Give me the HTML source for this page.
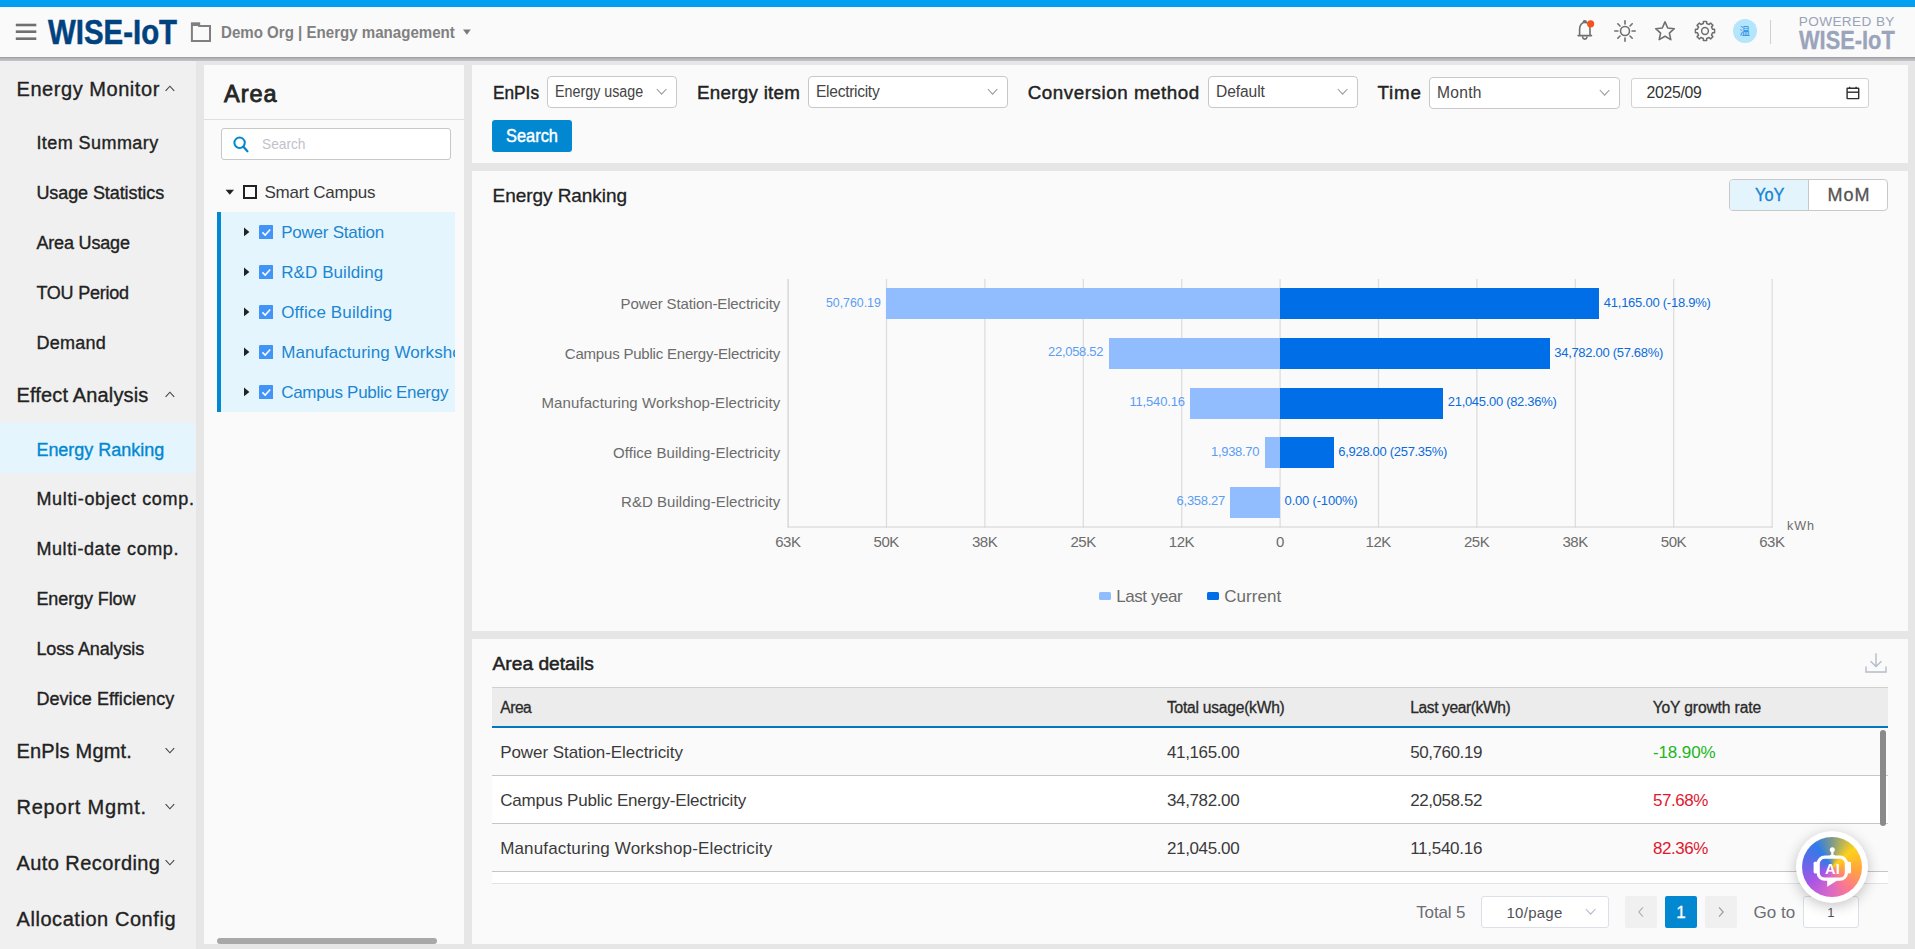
<!DOCTYPE html>
<html lang="en"><head><meta charset="utf-8"><title>Energy Ranking - WISE-IoT</title>
<style>
html,body{margin:0;padding:0;}
body{width:1915px;height:949px;overflow:hidden;position:relative;background:#e6e6e6;font-family:"Liberation Sans","Noto Sans CJK SC",sans-serif;}
.b{position:absolute;box-sizing:border-box;}
.t{position:absolute;white-space:nowrap;line-height:0;height:0;}

</style></head><body>
<div class="b" style="left:0px;top:56.6px;width:1915px;height:4.6px;background:linear-gradient(#96969a 0%,#b2b2b7 35%,#c4c4c9 100%);"></div>
<div class="b" style="left:0px;top:7px;width:1915px;height:49.8px;background:#fafafa;"></div>
<div class="b" style="left:0px;top:0px;width:1915px;height:7px;background:#039ff1;"></div>
<svg class="b" style="left:14px;top:20px;" width="26" height="24" viewBox="0 0 26 24"><rect x="1.8" y="3.7" width="20.5" height="2.6" fill="#707070"/><rect x="1.8" y="10.4" width="20.5" height="2.6" fill="#707070"/><rect x="1.8" y="17.4" width="20.5" height="2.6" fill="#707070"/></svg>
<svg class="b" style="left:190px;top:21px;" width="22" height="22" viewBox="0 0 22 22"><path d="M1.9 2.6 H9.2 V4.9 H20 V19.9 H1.9 Z" fill="none" stroke="#7f7f7f" stroke-width="2"/><rect x="1" y="1.6" width="8.8" height="3.4" fill="#7f7f7f"/></svg>
<svg class="b" style="left:462px;top:29px;" width="10" height="7" viewBox="0 0 10 7"><path d="M1 0.4 H8.8 L4.9 5.8 Z" fill="#7a7a7a"/></svg>
<div class="b" style="left:0px;top:61.2px;width:196px;height:888px;background:#f0f0f0;"></div>
<div class="b" style="left:0px;top:423px;width:195px;height:50px;background:#e5f5fe;"></div>
<svg class="b" style="left:165px;top:84.5px;" width="10" height="7" viewBox="0 0 10 7"><path d="M0.6 5.9 L4.9 1.2 L9.2 5.9" fill="none" stroke="#444" stroke-width="1.1"/></svg>
<svg class="b" style="left:165px;top:391px;" width="10" height="7" viewBox="0 0 10 7"><path d="M0.6 5.9 L4.9 1.2 L9.2 5.9" fill="none" stroke="#444" stroke-width="1.1"/></svg>
<svg class="b" style="left:165px;top:746.8px;" width="10" height="7" viewBox="0 0 10 7"><path d="M0.6 1.1 L4.9 5.8 L9.2 1.1" fill="none" stroke="#444" stroke-width="1.1"/></svg>
<svg class="b" style="left:165px;top:802.8px;" width="10" height="7" viewBox="0 0 10 7"><path d="M0.6 1.1 L4.9 5.8 L9.2 1.1" fill="none" stroke="#444" stroke-width="1.1"/></svg>
<svg class="b" style="left:165px;top:858.8px;" width="10" height="7" viewBox="0 0 10 7"><path d="M0.6 1.1 L4.9 5.8 L9.2 1.1" fill="none" stroke="#444" stroke-width="1.1"/></svg>
<div class="b" style="left:204px;top:65px;width:260.2px;height:879px;background:#fafafa;"></div>
<div class="b" style="left:472px;top:65px;width:1436px;height:98px;background:#fafafa;"></div>
<div class="b" style="left:472px;top:171px;width:1436px;height:460px;background:#fafafa;"></div>
<div class="b" style="left:472px;top:638.5px;width:1436px;height:305.5px;background:#fafafa;"></div>
<div class="b" style="left:204px;top:119px;width:260px;height:1px;background:#dcdfe6;"></div>
<div class="b" style="left:221px;top:128.2px;width:230px;height:31.5px;background:#fff;border:1px solid #c8c8c8;border-radius:3px;"></div>
<svg class="b" style="left:232.4px;top:135px;" width="18" height="18" viewBox="0 0 18 18"><circle cx="7.6" cy="7.8" r="5.2" fill="none" stroke="#0288d1" stroke-width="2"/><path d="M11.4 11.8 L15.4 16.2" stroke="#0288d1" stroke-width="2.3" stroke-linecap="round"/></svg>
<svg class="b" style="left:225px;top:189px;" width="10" height="7" viewBox="0 0 10 7"><path d="M0.6 0.8 H9 L4.8 5.8 Z" fill="#222"/></svg>
<div class="b" style="left:243px;top:185px;width:14px;height:14px;background:#fdfdfd;border:2px solid #222;"></div>
<div class="b" style="left:217px;top:211.7px;width:238.3px;height:200.2px;background:#e5f5fe;"></div>
<div class="b" style="left:217px;top:211.7px;width:4px;height:200.2px;background:#0288d1;"></div>
<svg class="b" style="left:243px;top:226.8px;" width="8" height="10" viewBox="0 0 8 10"><path d="M1 0.6 L6.4 4.9 L1 9.2 Z" fill="#222"/></svg>
<svg class="b" style="left:258.8px;top:224.60000000000002px;" width="14.4" height="14.4" viewBox="0 0 14.4 14.4"><rect width="14.4" height="14.4" rx="1.5" fill="#4294f6"/><path d="M3.4 7.4 L6.2 10.1 L11.2 4.6" fill="none" stroke="#fff" stroke-width="1.5"/></svg>
<svg class="b" style="left:243px;top:266.85px;" width="8" height="10" viewBox="0 0 8 10"><path d="M1 0.6 L6.4 4.9 L1 9.2 Z" fill="#222"/></svg>
<svg class="b" style="left:258.8px;top:264.65000000000003px;" width="14.4" height="14.4" viewBox="0 0 14.4 14.4"><rect width="14.4" height="14.4" rx="1.5" fill="#4294f6"/><path d="M3.4 7.4 L6.2 10.1 L11.2 4.6" fill="none" stroke="#fff" stroke-width="1.5"/></svg>
<svg class="b" style="left:243px;top:306.9px;" width="8" height="10" viewBox="0 0 8 10"><path d="M1 0.6 L6.4 4.9 L1 9.2 Z" fill="#222"/></svg>
<svg class="b" style="left:258.8px;top:304.7px;" width="14.4" height="14.4" viewBox="0 0 14.4 14.4"><rect width="14.4" height="14.4" rx="1.5" fill="#4294f6"/><path d="M3.4 7.4 L6.2 10.1 L11.2 4.6" fill="none" stroke="#fff" stroke-width="1.5"/></svg>
<svg class="b" style="left:243px;top:346.95px;" width="8" height="10" viewBox="0 0 8 10"><path d="M1 0.6 L6.4 4.9 L1 9.2 Z" fill="#222"/></svg>
<svg class="b" style="left:258.8px;top:344.75px;" width="14.4" height="14.4" viewBox="0 0 14.4 14.4"><rect width="14.4" height="14.4" rx="1.5" fill="#4294f6"/><path d="M3.4 7.4 L6.2 10.1 L11.2 4.6" fill="none" stroke="#fff" stroke-width="1.5"/></svg>
<svg class="b" style="left:243px;top:387.0px;" width="8" height="10" viewBox="0 0 8 10"><path d="M1 0.6 L6.4 4.9 L1 9.2 Z" fill="#222"/></svg>
<svg class="b" style="left:258.8px;top:384.8px;" width="14.4" height="14.4" viewBox="0 0 14.4 14.4"><rect width="14.4" height="14.4" rx="1.5" fill="#4294f6"/><path d="M3.4 7.4 L6.2 10.1 L11.2 4.6" fill="none" stroke="#fff" stroke-width="1.5"/></svg>
<div class="b" style="left:217px;top:938px;width:220px;height:6px;background:#a8a8a8;border-radius:3px;"></div>
<div class="b" style="left:547px;top:76.3px;width:130px;height:31.6px;background:#fff;border:1px solid #c9c9c9;border-radius:4px;"></div>
<svg class="b" style="left:656.4px;top:88.0px;" width="12" height="8" viewBox="0 0 12 8"><path d="M0.8 1 L5.6 6.2 L10.4 1" fill="none" stroke="#9a9a9a" stroke-width="1.1"/></svg>
<div class="b" style="left:808px;top:76.3px;width:200px;height:31.6px;background:#fff;border:1px solid #c9c9c9;border-radius:4px;"></div>
<svg class="b" style="left:987.4px;top:88.0px;" width="12" height="8" viewBox="0 0 12 8"><path d="M0.8 1 L5.6 6.2 L10.4 1" fill="none" stroke="#9a9a9a" stroke-width="1.1"/></svg>
<div class="b" style="left:1208px;top:76.3px;width:150px;height:31.6px;background:#fff;border:1px solid #c9c9c9;border-radius:4px;"></div>
<svg class="b" style="left:1337.4px;top:88.0px;" width="12" height="8" viewBox="0 0 12 8"><path d="M0.8 1 L5.6 6.2 L10.4 1" fill="none" stroke="#9a9a9a" stroke-width="1.1"/></svg>
<div class="b" style="left:1429px;top:77.2px;width:191px;height:31.6px;background:#fff;border:1px solid #c9c9c9;border-radius:4px;"></div>
<svg class="b" style="left:1599.4px;top:88.9px;" width="12" height="8" viewBox="0 0 12 8"><path d="M0.8 1 L5.6 6.2 L10.4 1" fill="none" stroke="#9a9a9a" stroke-width="1.1"/></svg>
<div class="b" style="left:1631px;top:78.2px;width:238px;height:29.6px;background:#fff;border:1px solid #d2d2d2;border-radius:3px;"></div>
<svg class="b" style="left:1846px;top:86px;" width="14" height="14" viewBox="0 0 14 14"><rect x="1.1" y="2.2" width="11.6" height="10.4" rx="0.4" fill="none" stroke="#2f2f2f" stroke-width="1.4"/><path d="M1.1 6.2 H12.7" stroke="#2f2f2f" stroke-width="1.4"/><path d="M3.7 0.8 V2.6 M10.1 0.8 V2.6" stroke="#2f2f2f" stroke-width="1.3"/></svg>
<div class="b" style="left:492px;top:120px;width:80px;height:31.8px;background:#0288d1;border-radius:3px;"></div>
<div class="b" style="left:1729px;top:179px;width:158.8px;height:31.5px;background:#fff;border:1px solid #c9c9c9;border-radius:4px;"></div>
<div class="b" style="left:1730px;top:180px;width:78.4px;height:29.5px;background:#e3f4fd;border-radius:3px 0 0 3px;"></div>
<div class="b" style="left:1808px;top:179.5px;width:1px;height:30.5px;background:#c9c9c9;"></div>
<svg class="b" style="left:780px;top:270px;" width="1000" height="262" viewBox="0 0 1000 262"><line x1="8.10" y1="9" x2="8.10" y2="257.5" stroke="#d2d2d2" stroke-width="1.25"/><line x1="106.50" y1="9" x2="106.50" y2="257.5" stroke="#dcdcdc" stroke-width="1.25"/><line x1="204.90" y1="9" x2="204.90" y2="257.5" stroke="#dcdcdc" stroke-width="1.25"/><line x1="303.30" y1="9" x2="303.30" y2="257.5" stroke="#dcdcdc" stroke-width="1.25"/><line x1="401.70" y1="9" x2="401.70" y2="257.5" stroke="#dcdcdc" stroke-width="1.25"/><line x1="500.10" y1="9" x2="500.10" y2="257.5" stroke="#dcdcdc" stroke-width="1.25"/><line x1="598.50" y1="9" x2="598.50" y2="257.5" stroke="#dcdcdc" stroke-width="1.25"/><line x1="696.90" y1="9" x2="696.90" y2="257.5" stroke="#dcdcdc" stroke-width="1.25"/><line x1="795.30" y1="9" x2="795.30" y2="257.5" stroke="#dcdcdc" stroke-width="1.25"/><line x1="893.70" y1="9" x2="893.70" y2="257.5" stroke="#dcdcdc" stroke-width="1.25"/><line x1="992.10" y1="9" x2="992.10" y2="257.5" stroke="#dcdcdc" stroke-width="1.25"/><line x1="7.50" y1="257" x2="992.70" y2="257" stroke="#d2d2d2" stroke-width="1.2"/></svg>
<div class="b" style="left:885.9px;top:288.3px;width:394.2px;height:31px;background:#91bdff;"></div>
<div class="b" style="left:1280.1px;top:288.3px;width:319.2px;height:31px;background:#006ee6;"></div>
<div class="b" style="left:1108.5px;top:337.90000000000003px;width:171.6px;height:31px;background:#91bdff;"></div>
<div class="b" style="left:1280.1px;top:337.90000000000003px;width:269.7px;height:31px;background:#006ee6;"></div>
<div class="b" style="left:1190.0px;top:387.5px;width:90.1px;height:31px;background:#91bdff;"></div>
<div class="b" style="left:1280.1px;top:387.5px;width:163.2px;height:31px;background:#006ee6;"></div>
<div class="b" style="left:1264.5px;top:437.1px;width:15.6px;height:31px;background:#91bdff;"></div>
<div class="b" style="left:1280.1px;top:437.1px;width:53.7px;height:31px;background:#006ee6;"></div>
<div class="b" style="left:1230.2px;top:486.70000000000005px;width:49.9px;height:31px;background:#91bdff;"></div>
<div class="b" style="left:1099.4px;top:592.2px;width:12px;height:8px;background:#91bdff;border-radius:1.5px;"></div>
<div class="b" style="left:1207px;top:592.2px;width:12px;height:8px;background:#006ee6;border-radius:1.5px;"></div>
<svg class="b" style="left:1864px;top:651px;" width="24" height="23" viewBox="0 0 24 23"><path d="M12 2.2 V15.2 M6.6 10.2 L12 15.6 L17.4 10.2" fill="none" stroke="#b4bcc6" stroke-width="1.4"/><path d="M2 15.4 V21 H22 V15.4" fill="none" stroke="#b4bcc6" stroke-width="1.4"/></svg>
<div class="b" style="left:492px;top:687px;width:1396px;height:1px;background:#d0d0d0;"></div>
<div class="b" style="left:492px;top:688px;width:1396px;height:38.2px;background:#ececec;"></div>
<div class="b" style="left:492px;top:726px;width:1396px;height:2px;background:#0277bd;"></div>
<div class="b" style="left:492px;top:775.3px;width:1396px;height:48px;background:#fff;"></div>
<div class="b" style="left:492px;top:871.5px;width:1396px;height:11.5px;background:#fff;"></div>
<div class="b" style="left:492px;top:775px;width:1396px;height:1px;background:#c6c6c6;"></div>
<div class="b" style="left:492px;top:823px;width:1396px;height:1px;background:#c6c6c6;"></div>
<div class="b" style="left:492px;top:871px;width:1396px;height:1px;background:#c6c6c6;"></div>
<div class="b" style="left:492px;top:883px;width:1396px;height:1px;background:#dfe3ea;"></div>
<div class="b" style="left:1880px;top:730px;width:6.3px;height:95.8px;background:#8a8a8a;border-radius:3.2px;"></div>
<div class="b" style="left:1481px;top:896.3px;width:127.6px;height:31.4px;background:#fff;border:1px solid #dcdfe6;border-radius:3px;"></div>
<svg class="b" style="left:1585px;top:908px;" width="12" height="8" viewBox="0 0 12 8"><path d="M0.8 1 L5.6 6.2 L10.4 1" fill="none" stroke="#b4b8c0" stroke-width="1.1"/></svg>
<div class="b" style="left:1625px;top:896.3px;width:32px;height:31.4px;background:#f0f0f1;border-radius:2px;"></div>
<svg class="b" style="left:1636.5px;top:906px;" width="8" height="12" viewBox="0 0 8 12"><path d="M6 1.4 L1.8 6 L6 10.6" fill="none" stroke="#b0b3ba" stroke-width="1.2"/></svg>
<div class="b" style="left:1665px;top:896.3px;width:32px;height:31.4px;background:#0288d1;border-radius:2px;"></div>
<div class="b" style="left:1705px;top:896.3px;width:32px;height:31.4px;background:#f0f0f1;border-radius:2px;"></div>
<svg class="b" style="left:1717px;top:906px;" width="8" height="12" viewBox="0 0 8 12"><path d="M2 1.4 L6.2 6 L2 10.6" fill="none" stroke="#9a9da4" stroke-width="1.2"/></svg>
<div class="b" style="left:1803.4px;top:896.3px;width:55.4px;height:31.4px;background:#fff;border:1px solid #dcdfe6;border-radius:3px;"></div>
<svg class="b" style="left:1573px;top:18px;" width="24" height="24" viewBox="0 0 24 24"><path d="M5.1 17.6 H18.5 M6.6 17.2 V11.2 C6.6 6.9 9 4.5 11.8 4.5 C14.6 4.5 17 6.9 17 11.2 V17.2 M10.3 4.4 C10.3 2.4 13.3 2.4 13.3 4.4 M9.7 19.4 C10 21.7 13.6 21.7 13.9 19.4" fill="none" stroke="#6f6f6f" stroke-width="1.6" stroke-linecap="round" stroke-linejoin="round"/><circle cx="17.6" cy="5.8" r="3.6" fill="#f4511e"/></svg>
<svg class="b" style="left:1613px;top:19.2px;" width="24" height="24" viewBox="0 0 24 24"><circle cx="12" cy="12" r="4.5" fill="none" stroke="#6f6f6f" stroke-width="1.6"/><path d="M12 1.8 V4.9" transform="rotate(0 12 12)" stroke="#6f6f6f" stroke-width="1.6" stroke-linecap="round"/><path d="M12 1.8 V4.9" transform="rotate(45 12 12)" stroke="#6f6f6f" stroke-width="1.6" stroke-linecap="round"/><path d="M12 1.8 V4.9" transform="rotate(90 12 12)" stroke="#6f6f6f" stroke-width="1.6" stroke-linecap="round"/><path d="M12 1.8 V4.9" transform="rotate(135 12 12)" stroke="#6f6f6f" stroke-width="1.6" stroke-linecap="round"/><path d="M12 1.8 V4.9" transform="rotate(180 12 12)" stroke="#6f6f6f" stroke-width="1.6" stroke-linecap="round"/><path d="M12 1.8 V4.9" transform="rotate(225 12 12)" stroke="#6f6f6f" stroke-width="1.6" stroke-linecap="round"/><path d="M12 1.8 V4.9" transform="rotate(270 12 12)" stroke="#6f6f6f" stroke-width="1.6" stroke-linecap="round"/><path d="M12 1.8 V4.9" transform="rotate(315 12 12)" stroke="#6f6f6f" stroke-width="1.6" stroke-linecap="round"/></svg>
<svg class="b" style="left:1653px;top:19.2px;" width="24" height="24" viewBox="0 0 24 24"><path d="M12 2.9 L14.7 9 L21.3 9.7 L16.4 14.1 L17.8 20.6 L12 17.3 L6.2 20.6 L7.6 14.1 L2.7 9.7 L9.3 9 Z" fill="none" stroke="#6f6f6f" stroke-width="1.6" stroke-linejoin="round"/></svg>
<svg class="b" style="left:1693px;top:19.2px;" width="24" height="24" viewBox="0 0 24 24"><path d="M10.36 2.44 L13.64 2.44 L13.68 4.49 L16.13 5.50 L17.60 4.08 L19.92 6.40 L18.50 7.87 L19.51 10.32 L21.56 10.36 L21.56 13.64 L19.51 13.68 L18.50 16.13 L19.92 17.60 L17.60 19.92 L16.13 18.50 L13.68 19.51 L13.64 21.56 L10.36 21.56 L10.32 19.51 L7.87 18.50 L6.40 19.92 L4.08 17.60 L5.50 16.13 L4.49 13.68 L2.44 13.64 L2.44 10.36 L4.49 10.32 L5.50 7.87 L4.08 6.40 L6.40 4.08 L7.87 5.50 L10.32 4.49 Z" fill="none" stroke="#6f6f6f" stroke-width="1.5" stroke-linejoin="round"/><circle cx="12" cy="12" r="3.4" fill="none" stroke="#6f6f6f" stroke-width="1.5"/></svg>
<div class="b" style="left:1732.8px;top:19.2px;width:24px;height:24px;background:#b3e5fc;border-radius:12px;"></div>
<div class="b" style="left:1769.5px;top:20px;width:1px;height:24px;background:#d0d0d0;"></div>
<span class="t" style="top:32.31px;font-size:34.6px;color:#004280;font-weight:700;-webkit-text-stroke:0.5px #004280;left:47.60px;transform-origin:0 50%;transform:scaleX(0.8507);">WISE-IoT</span>
<span class="t" style="top:32.88px;font-size:16.8px;color:#808080;font-weight:700;left:221.30px;transform-origin:0 50%;transform:scaleX(0.8985);">Demo Org | Energy management</span>
<span class="t" style="top:88.67px;font-size:20px;color:#222;-webkit-text-stroke:0.35px #222;letter-spacing:0.552px;left:16.50px;">Energy Monitor</span>
<span class="t" style="top:143.26px;font-size:18px;color:#222;-webkit-text-stroke:0.35px #222;letter-spacing:0.434px;left:36.40px;">Item Summary</span>
<span class="t" style="top:193.16px;font-size:18px;color:#222;-webkit-text-stroke:0.35px #222;letter-spacing:-0.084px;left:36.40px;">Usage Statistics</span>
<span class="t" style="top:243.16px;font-size:18px;color:#222;-webkit-text-stroke:0.35px #222;letter-spacing:-0.163px;left:36.40px;">Area Usage</span>
<span class="t" style="top:293.16px;font-size:18px;color:#222;-webkit-text-stroke:0.35px #222;letter-spacing:-0.223px;left:36.40px;">TOU Period</span>
<span class="t" style="top:343.26px;font-size:18px;color:#222;-webkit-text-stroke:0.35px #222;letter-spacing:0.251px;left:36.40px;">Demand</span>
<span class="t" style="top:394.57px;font-size:20px;color:#222;-webkit-text-stroke:0.35px #222;letter-spacing:0.150px;left:16.50px;">Effect Analysis</span>
<span class="t" style="top:449.66px;font-size:18px;color:#0288d1;-webkit-text-stroke:0.35px #0288d1;letter-spacing:-0.021px;left:36.40px;">Energy Ranking</span>
<span class="t" style="top:499.36px;font-size:18px;color:#222;-webkit-text-stroke:0.35px #222;letter-spacing:0.673px;left:36.40px;">Multi-object comp.</span>
<span class="t" style="top:549.26px;font-size:18px;color:#222;-webkit-text-stroke:0.35px #222;letter-spacing:0.602px;left:36.40px;">Multi-date comp.</span>
<span class="t" style="top:599.16px;font-size:18px;color:#222;-webkit-text-stroke:0.35px #222;letter-spacing:-0.095px;left:36.40px;">Energy Flow</span>
<span class="t" style="top:648.96px;font-size:18px;color:#222;-webkit-text-stroke:0.35px #222;letter-spacing:-0.105px;left:36.40px;">Loss Analysis</span>
<span class="t" style="top:699.06px;font-size:18px;color:#222;-webkit-text-stroke:0.35px #222;letter-spacing:0.073px;left:36.40px;">Device Efficiency</span>
<span class="t" style="top:750.57px;font-size:20px;color:#222;-webkit-text-stroke:0.35px #222;letter-spacing:0.204px;left:16.50px;">EnPls Mgmt.</span>
<span class="t" style="top:806.57px;font-size:20px;color:#222;-webkit-text-stroke:0.35px #222;letter-spacing:0.768px;left:16.50px;">Report Mgmt.</span>
<span class="t" style="top:862.67px;font-size:20px;color:#222;-webkit-text-stroke:0.35px #222;letter-spacing:0.433px;left:16.50px;">Auto Recording</span>
<span class="t" style="top:918.57px;font-size:20px;color:#222;-webkit-text-stroke:0.35px #222;letter-spacing:0.557px;left:16.50px;">Allocation Config</span>
<span class="t" style="top:93.76px;font-size:23.5px;color:#262626;-webkit-text-stroke:0.85px #262626;letter-spacing:0.986px;left:224.00px;">Area</span>
<span class="t" style="top:143.70px;font-size:15px;color:#bfc3cb;left:261.50px;transform-origin:0 50%;transform:scaleX(0.9152);">Search</span>
<span class="t" style="top:193.11px;font-size:17px;color:#3a3a3a;letter-spacing:-0.216px;left:264.50px;">Smart Campus</span>
<span class="t" style="top:233.01px;font-size:17px;color:#1c86d1;letter-spacing:-0.237px;left:281.20px;">Power Station</span>
<span class="t" style="top:273.06px;font-size:17px;color:#1c86d1;letter-spacing:0.081px;left:281.20px;">R&amp;D Building</span>
<span class="t" style="top:313.11px;font-size:17px;color:#1c86d1;letter-spacing:0.121px;left:281.20px;">Office Building</span>
<span class="t" style="top:353.16px;font-size:17px;color:#1c86d1;letter-spacing:0.063px;left:281.20px;max-width:174px;overflow:hidden;height:30px;line-height:30px;margin-top:-15px;">Manufacturing Workshop</span>
<span class="t" style="top:393.21px;font-size:17px;color:#1c86d1;letter-spacing:-0.301px;left:281.20px;">Campus Public Energy</span>
<span class="t" style="top:92.59px;font-size:18.8px;color:#222;-webkit-text-stroke:0.42px #222;left:492.50px;transform-origin:0 50%;transform:scaleX(0.9180);">EnPIs</span>
<span class="t" style="top:92.19px;font-size:15.6px;color:#444;left:555.00px;transform-origin:0 50%;transform:scaleX(0.9165);">Energy usage</span>
<span class="t" style="top:92.59px;font-size:18.8px;color:#222;-webkit-text-stroke:0.42px #222;letter-spacing:0.278px;left:697.00px;">Energy item</span>
<span class="t" style="top:92.19px;font-size:15.6px;color:#444;letter-spacing:-0.302px;left:816.00px;">Electricity</span>
<span class="t" style="top:92.59px;font-size:18.8px;color:#222;-webkit-text-stroke:0.42px #222;letter-spacing:0.545px;left:1027.70px;">Conversion method</span>
<span class="t" style="top:92.19px;font-size:15.6px;color:#444;letter-spacing:-0.087px;left:1216.00px;">Default</span>
<span class="t" style="top:92.59px;font-size:18.8px;color:#222;-webkit-text-stroke:0.42px #222;letter-spacing:0.784px;left:1377.50px;">Time</span>
<span class="t" style="top:93.09px;font-size:15.6px;color:#444;letter-spacing:0.264px;left:1437.00px;">Month</span>
<span class="t" style="top:93.13px;font-size:15.8px;color:#333;letter-spacing:-0.285px;left:1646.50px;">2025/09</span>
<span class="t" style="top:135.60px;font-size:17.6px;color:#fff;-webkit-text-stroke:0.45px #fff;left:506.40px;transform-origin:0 50%;transform:scaleX(0.9327);">Search</span>
<span class="t" style="top:195.92px;font-size:19px;color:#222;-webkit-text-stroke:0.3px #222;letter-spacing:-0.046px;left:492.50px;">Energy Ranking</span>
<span class="t" style="top:195.06px;font-size:18px;color:#1783d0;-webkit-text-stroke:0.3px #1783d0;left:1754.80px;transform-origin:0 50%;transform:scaleX(0.9081);">YoY</span>
<span class="t" style="top:195.06px;font-size:18px;color:#555;-webkit-text-stroke:0.3px #555;letter-spacing:1.100px;left:1827.40px;">MoM</span>
<span class="t" style="top:303.90px;font-size:15px;color:#6c6c6c;letter-spacing:-0.123px;right:1134.92px;">Power Station-Electricity</span>
<span class="t" style="top:302.80px;font-size:13px;color:#5b9df5;right:1034.10px;transform-origin:100% 50%;transform:scaleX(0.9491);">50,760.19</span>
<span class="t" style="top:302.90px;font-size:13px;color:#0a6cdc;letter-spacing:-0.247px;left:1603.80px;">41,165.00 (-18.9%)</span>
<span class="t" style="top:353.50px;font-size:15px;color:#6c6c6c;letter-spacing:-0.205px;right:1135.00px;">Campus Public Energy-Electricity</span>
<span class="t" style="top:352.40px;font-size:13px;color:#5b9df5;letter-spacing:-0.305px;right:811.85px;">22,058.52</span>
<span class="t" style="top:352.50px;font-size:13px;color:#0a6cdc;letter-spacing:-0.306px;left:1554.30px;">34,782.00 (57.68%)</span>
<span class="t" style="top:403.10px;font-size:15px;color:#6c6c6c;letter-spacing:0.092px;right:1134.71px;">Manufacturing Workshop-Electricity</span>
<span class="t" style="top:402.00px;font-size:13px;color:#5b9df5;letter-spacing:-0.159px;right:730.14px;">11,540.16</span>
<span class="t" style="top:402.10px;font-size:13px;color:#0a6cdc;letter-spacing:-0.306px;left:1447.79px;">21,045.00 (82.36%)</span>
<span class="t" style="top:452.70px;font-size:15px;color:#6c6c6c;letter-spacing:0.061px;right:1134.74px;">Office Building-Electricity</span>
<span class="t" style="top:451.60px;font-size:13px;color:#5b9df5;letter-spacing:-0.316px;right:655.85px;">1,938.70</span>
<span class="t" style="top:451.70px;font-size:13px;color:#0a6cdc;letter-spacing:-0.306px;left:1338.32px;">6,928.00 (257.35%)</span>
<span class="t" style="top:502.30px;font-size:15px;color:#6c6c6c;letter-spacing:0.035px;right:1134.76px;">R&amp;D Building-Electricity</span>
<span class="t" style="top:501.20px;font-size:13px;color:#5b9df5;letter-spacing:-0.287px;right:690.09px;">6,358.27</span>
<span class="t" style="top:501.30px;font-size:13px;color:#0a6cdc;letter-spacing:-0.187px;left:1284.60px;">0.00 (-100%)</span>
<span class="t" style="top:541.70px;font-size:15px;color:#6c6c6c;letter-spacing:-0.452px;left:787.87px;transform:translateX(-50%);">63K</span>
<span class="t" style="top:541.70px;font-size:15px;color:#6c6c6c;letter-spacing:-0.452px;left:886.27px;transform:translateX(-50%);">50K</span>
<span class="t" style="top:541.70px;font-size:15px;color:#6c6c6c;letter-spacing:-0.452px;left:984.67px;transform:translateX(-50%);">38K</span>
<span class="t" style="top:541.70px;font-size:15px;color:#6c6c6c;letter-spacing:-0.452px;left:1083.07px;transform:translateX(-50%);">25K</span>
<span class="t" style="top:541.70px;font-size:15px;color:#6c6c6c;letter-spacing:-0.452px;left:1181.47px;transform:translateX(-50%);">12K</span>
<span class="t" style="top:541.70px;font-size:15px;color:#6c6c6c;left:1280.10px;transform:translateX(-50%);">0</span>
<span class="t" style="top:541.70px;font-size:15px;color:#6c6c6c;letter-spacing:-0.452px;left:1378.27px;transform:translateX(-50%);">12K</span>
<span class="t" style="top:541.70px;font-size:15px;color:#6c6c6c;letter-spacing:-0.452px;left:1476.67px;transform:translateX(-50%);">25K</span>
<span class="t" style="top:541.70px;font-size:15px;color:#6c6c6c;letter-spacing:-0.452px;left:1575.07px;transform:translateX(-50%);">38K</span>
<span class="t" style="top:541.70px;font-size:15px;color:#6c6c6c;letter-spacing:-0.452px;left:1673.47px;transform:translateX(-50%);">50K</span>
<span class="t" style="top:541.70px;font-size:15px;color:#6c6c6c;letter-spacing:-0.452px;left:1771.87px;transform:translateX(-50%);">63K</span>
<span class="t" style="top:526.03px;font-size:12.6px;color:#6c6c6c;letter-spacing:0.906px;left:1787.00px;">kWh</span>
<span class="t" style="top:596.91px;font-size:17px;color:#6c6c6c;letter-spacing:-0.417px;left:1116.20px;">Last year</span>
<span class="t" style="top:596.91px;font-size:17px;color:#6c6c6c;letter-spacing:0.052px;left:1224.20px;">Current</span>
<span class="t" style="top:663.65px;font-size:19.2px;color:#222;-webkit-text-stroke:0.5px #222;letter-spacing:0.007px;left:492.50px;">Area details</span>
<span class="t" style="top:708.09px;font-size:15.6px;color:#2a2a2a;-webkit-text-stroke:0.3px #2a2a2a;letter-spacing:-0.451px;left:500.20px;">Area</span>
<span class="t" style="top:708.09px;font-size:15.6px;color:#2a2a2a;-webkit-text-stroke:0.3px #2a2a2a;letter-spacing:-0.236px;left:1167.00px;">Total usage(kWh)</span>
<span class="t" style="top:708.09px;font-size:15.6px;color:#2a2a2a;-webkit-text-stroke:0.3px #2a2a2a;letter-spacing:-0.394px;left:1410.20px;">Last year(kWh)</span>
<span class="t" style="top:708.09px;font-size:15.6px;color:#2a2a2a;-webkit-text-stroke:0.3px #2a2a2a;letter-spacing:-0.122px;left:1652.70px;">YoY growth rate</span>
<span class="t" style="top:752.81px;font-size:17px;color:#3a3a3a;letter-spacing:-0.060px;left:500.20px;">Power Station-Electricity</span>
<span class="t" style="top:752.81px;font-size:17px;color:#3a3a3a;letter-spacing:-0.380px;left:1167.00px;">41,165.00</span>
<span class="t" style="top:752.81px;font-size:17px;color:#3a3a3a;letter-spacing:-0.430px;left:1410.20px;">50,760.19</span>
<span class="t" style="top:752.81px;font-size:17px;color:#22b522;letter-spacing:-0.121px;left:1653.00px;">-18.90%</span>
<span class="t" style="top:800.81px;font-size:17px;color:#3a3a3a;letter-spacing:-0.168px;left:500.20px;">Campus Public Energy-Electricity</span>
<span class="t" style="top:800.81px;font-size:17px;color:#3a3a3a;letter-spacing:-0.380px;left:1167.00px;">34,782.00</span>
<span class="t" style="top:800.81px;font-size:17px;color:#3a3a3a;letter-spacing:-0.430px;left:1410.20px;">22,058.52</span>
<span class="t" style="top:800.81px;font-size:17px;color:#e0182f;letter-spacing:-0.454px;left:1653.00px;">57.68%</span>
<span class="t" style="top:848.81px;font-size:17px;color:#3a3a3a;letter-spacing:0.150px;left:500.20px;">Manufacturing Workshop-Electricity</span>
<span class="t" style="top:848.81px;font-size:17px;color:#3a3a3a;letter-spacing:-0.380px;left:1167.00px;">21,045.00</span>
<span class="t" style="top:848.81px;font-size:17px;color:#3a3a3a;letter-spacing:-0.272px;left:1410.20px;">11,540.16</span>
<span class="t" style="top:848.81px;font-size:17px;color:#e0182f;letter-spacing:-0.454px;left:1653.00px;">82.36%</span>
<span class="t" style="top:912.81px;font-size:17px;color:#6c6e74;letter-spacing:-0.116px;left:1416.20px;">Total 5</span>
<span class="t" style="top:912.50px;font-size:15px;color:#505257;letter-spacing:0.261px;left:1506.50px;">10/page</span>
<span class="t" style="top:912.61px;font-size:17px;color:#fff;-webkit-text-stroke:0.3px #fff;left:1680.90px;transform:translateX(-50%);">1</span>
<span class="t" style="top:912.81px;font-size:17px;color:#6c6e74;letter-spacing:0.052px;left:1753.40px;">Go to</span>
<span class="t" style="top:912.80px;font-size:13px;color:#505257;left:1830.80px;transform:translateX(-50%);">1</span>
<span class="t" style="top:32.10px;font-size:10.4px;color:#1e88e5;left:1744.80px;transform:translateX(-50%);">温</span>
<span class="t" style="top:22.19px;font-size:13.6px;color:#98a2b8;letter-spacing:0.383px;left:1798.80px;">POWERED BY</span>
<span class="t" style="top:40.33px;font-size:25.6px;color:#9aa4ba;font-weight:700;-webkit-text-stroke:0.3px #9aa4ba;left:1799.20px;transform-origin:0 50%;transform:scaleX(0.8521);">WISE-IoT</span>
<div class="b" style="left:1796px;top:831.2px;width:72px;height:72px;border-radius:36px;background:#fff;box-shadow:0 3px 14px rgba(0,0,0,.24);"></div>
<div class="b" style="left:1802px;top:837.2px;width:60px;height:60px;border-radius:30px;background:conic-gradient(from 0deg at 50% 50%,#7f9a8a 0deg,#ffd21a 50deg,#ffa63c 95deg,#ff7a8a 140deg,#d968c8 185deg,#a855e6 235deg,#5b6bea 285deg,#2f7de8 325deg,#7f9a8a 360deg);"></div>
<svg class="b" style="left:1802px;top:837.2px" width="60" height="60" viewBox="0 0 60 60"><circle cx="30.3" cy="12.8" r="2.5" fill="#fff"/><rect x="29.2" y="14" width="2.3" height="6" fill="#fff"/><rect x="27.6" y="18" width="5.5" height="2.4" rx="1" fill="#fff"/><rect x="11.6" y="24.8" width="4.2" height="11.6" rx="1.4" fill="#fff"/><rect x="44.8" y="24.8" width="4.2" height="11.6" rx="1.4" fill="#fff"/><rect x="16.2" y="20.2" width="28.2" height="22" rx="6.5" fill="none" stroke="#fff" stroke-width="3.2"/><path d="M25.2 43 L25.2 49.8 L36 43 Z" fill="#fff"/><text x="30.4" y="36.8" text-anchor="middle" font-family="Liberation Sans,sans-serif" font-weight="700" font-size="14.6" fill="#fff">AI</text></svg>
</body></html>
